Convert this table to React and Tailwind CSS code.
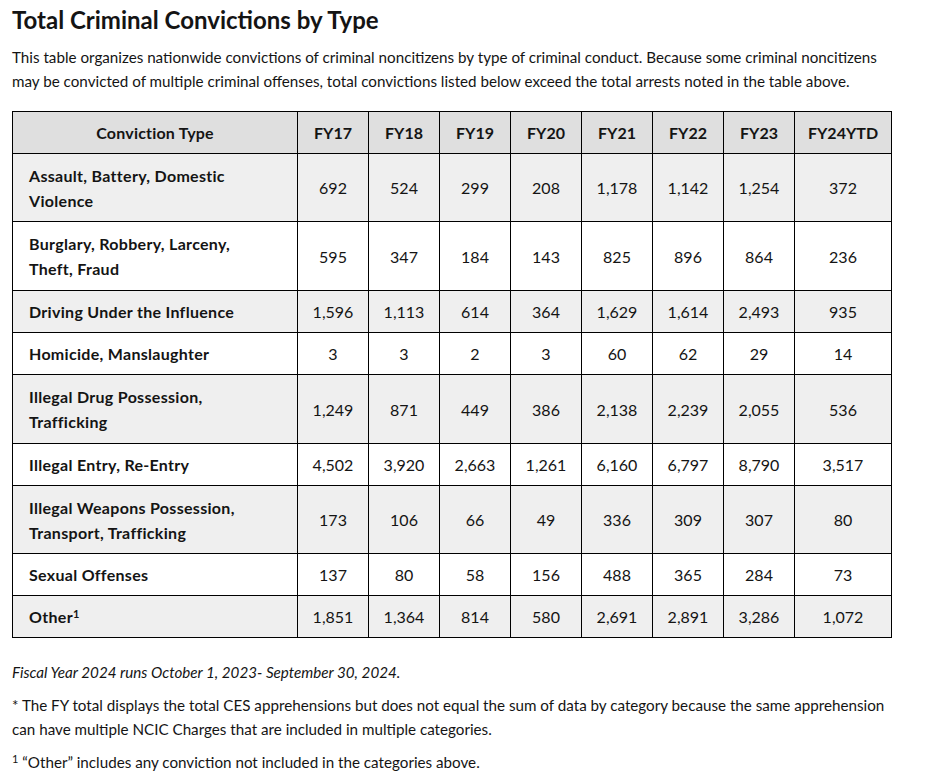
import React from "react";

const years = ["FY17", "FY18", "FY19", "FY20", "FY21", "FY22", "FY23", "FY24YTD"];

const rows = [
  { type: ["Assault, Battery, Domestic", "Violence"], h: "h-[68px]", vals: ["692", "524", "299", "208", "1,178", "1,142", "1,254", "372"] },
  { type: ["Burglary, Robbery, Larceny,", "Theft, Fraud"], h: "h-[69px]", vals: ["595", "347", "184", "143", "825", "896", "864", "236"] },
  { type: ["Driving Under the Influence"], h: "h-[42px]", vals: ["1,596", "1,113", "614", "364", "1,629", "1,614", "2,493", "935"] },
  { type: ["Homicide, Manslaughter"], h: "h-[42px]", vals: ["3", "3", "2", "3", "60", "62", "29", "14"] },
  { type: ["Illegal Drug Possession,", "Trafficking"], h: "h-[69px]", vals: ["1,249", "871", "449", "386", "2,138", "2,239", "2,055", "536"] },
  { type: ["Illegal Entry, Re-Entry"], h: "h-[42px]", vals: ["4,502", "3,920", "2,663", "1,261", "6,160", "6,797", "8,790", "3,517"] },
  { type: ["Illegal Weapons Possession,", "Transport, Trafficking"], h: "h-[68px]", vals: ["173", "106", "66", "49", "336", "309", "307", "80"] },
  { type: ["Sexual Offenses"], h: "h-[42px]", vals: ["137", "80", "58", "156", "488", "365", "284", "73"] },
  { type: ["Other"], sup: "1", h: "h-[42px]", vals: ["1,851", "1,364", "814", "580", "2,691", "2,891", "3,286", "1,072"] },
];

export default function App() {
  return (
    <div className="min-h-screen bg-white pl-3 pt-1 text-[#141414]" style={{ fontFamily: "Lato, 'Liberation Sans', sans-serif" }}>
      {/* Heading + intro */}
      <h2 className="text-[24px] font-bold leading-8">Total Criminal Convictions by Type</h2>
      <p className="mt-[9px] w-[895px] text-[15.2px] leading-6">
        This table organizes nationwide convictions of criminal noncitizens by type of criminal conduct. Because some criminal noncitizens may be convicted of multiple criminal offenses, total convictions listed below exceed the total arrests noted in the table above.
      </p>

      {/* Table */}
      <table className="mt-[18px] table-fixed border-collapse text-[16px] leading-[25px]" style={{ width: 880 }}>
        <colgroup>
          <col className="w-[285px]" />
          {years.slice(0, 7).map((y) => <col key={y} className="w-[71px]" />)}
          <col className="w-[97px]" />
        </colgroup>
        <thead>
          <tr className="h-[42px] bg-[#dfdfdf]">
            <th className="border border-black px-4 text-center font-bold tracking-[0.2px]">Conviction Type</th>
            {years.map((y) => (
              <th key={y} className="border border-black px-1 text-center font-bold">{y}</th>
            ))}
          </tr>
        </thead>
        <tbody>
          {rows.map((r, i) => (
            <tr key={r.type[0]} className={r.h + " " + (i % 2 === 0 ? "bg-[#efefef]" : "bg-white")}>
              <td className="border border-black py-2 pl-4 pr-2 text-left font-bold tracking-[0.3px]">
                {r.type.map((line, k) => (
                  <div key={k}>
                    {line}
                    {r.sup && <sup className="text-[11px] font-bold">{r.sup}</sup>}
                  </div>
                ))}
              </td>
              {r.vals.map((v, j) => (
                <td key={j} className="border border-black px-1 text-center">{v}</td>
              ))}
            </tr>
          ))}
        </tbody>
      </table>

      {/* Notes */}
      <p className="mt-[22px] text-[15.2px] italic leading-6">Fiscal Year 2024 runs October 1, 2023- September 30, 2024.</p>
      <p className="mt-[9px] w-[895px] text-[15.2px] leading-6">
        * The FY total displays the total CES apprehensions but does not equal the sum of data by category because the same apprehension can have multiple NCIC Charges that are included in multiple categories.
      </p>
      <p className="mt-[9px] text-[15.2px] leading-6">
        <sup className="text-[11px]">1</sup> “Other” includes any conviction not included in the categories above.
      </p>
    </div>
  );
}
